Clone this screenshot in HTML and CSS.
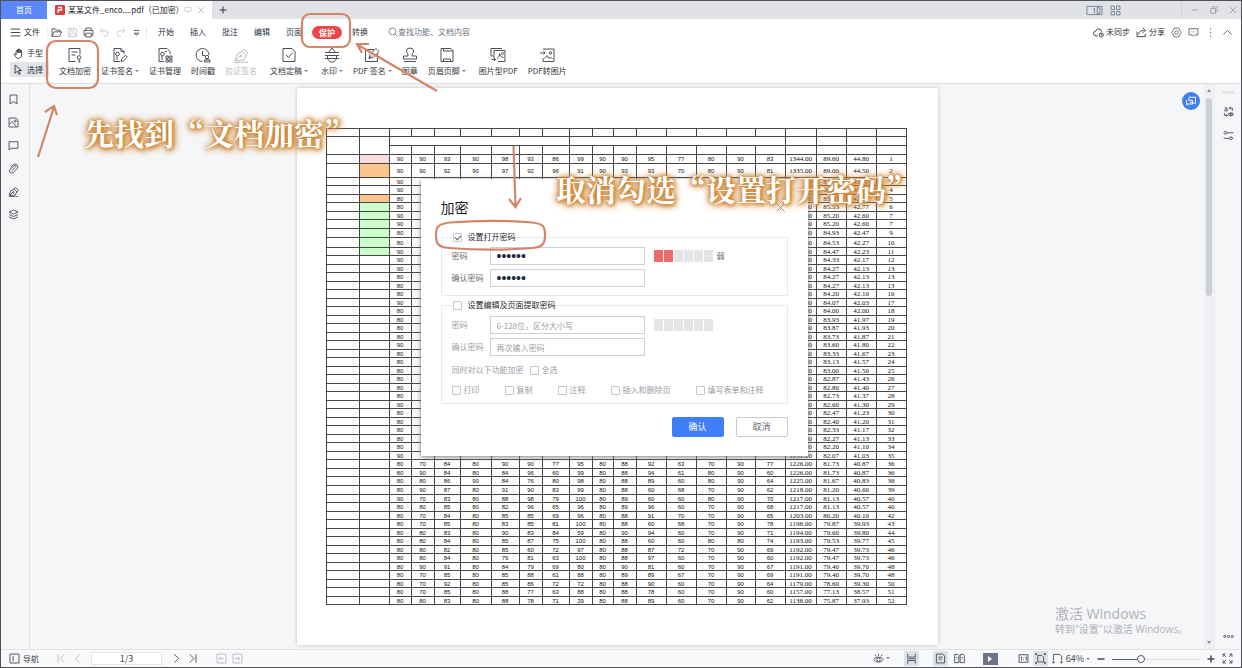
FILE: index.html
```html
<!DOCTYPE html>
<html lang="zh-CN">
<head>
<meta charset="utf-8">
<title>某某文件_enco....pdf</title>
<link rel="stylesheet" href="styles.css">
</head>
<body>
<svg class="defs" aria-hidden="true">
  <symbol id="bars" viewBox="0 0 16 16"><path d="M1 3h14M1 8h14M1 13h14"/></symbol>
  <symbol id="folder" viewBox="0 0 16 16"><path d="M1.500 13.500v-11h4l1.500 2h6v2.500M1.500 13.500l3-6.500h11l-3 6.500z"/></symbol>
  <symbol id="save" viewBox="0 0 16 16"><path d="M2 2h10l2 2v10H2zM5 2v4h5V2M4.500 14V9h7v5"/></symbol>
  <symbol id="print" viewBox="0 0 16 16"><path d="M4 5V1.500h8V5M4 12H1.500V5h13v7H12M4 9h8v5.500H4z"/></symbol>
  <symbol id="undo" viewBox="0 0 16 16"><path d="M5 2L2 5.500L5.500 8.500M2 5.500h7a4 4 0 0 1 0 8H7"/></symbol>
  <symbol id="redo" viewBox="0 0 16 16"><path d="M11 2l3 3.500l-3.500 3M14 5.500H7a4 4 0 0 0 0 8h2"/></symbol>
  <symbol id="more" viewBox="0 0 16 16"><path d="M4 5h8M4.500 9L8 12l3.500-3z"/></symbol>
  <symbol id="search" viewBox="0 0 16 16"><circle cx="7" cy="7" r="5.500"/><path d="M11 11l4 4"/></symbol>
  <symbol id="hand" viewBox="0 0 16 16"><path d="M4.500 10V4.500a1 1 0 0 1 2 0V7V2.500a1 1 0 0 1 2 0V7V2.500a1 1 0 0 1 2 0V7V4a1 1 0 0 1 2 0v6c0 3-1.500 5-4.500 5S4 13.500 2 9.500c-.4-1 .8-1.800 1.600-.8z"/></symbol>
  <symbol id="cursor" viewBox="0 0 16 16"><path d="M3 1.500v12l3-3l2.500 4.500l2-1l-2.500-4.500h4.500z"/></symbol>
  <symbol id="doclock" viewBox="0 0 16 16"><path d="M8.500 14.500H2v-13h11v6M4.500 5h6M4.500 8h4"/><circle cx="12" cy="10.500" r="1.800"/><path d="M12 12.300V15.500M12 14.500h1.500"/></symbol>
  <symbol id="certpen" viewBox="0 0 16 16"><path d="M8 14.500H2v-13h7l3 3V7M9 1.500v3h3M5 9v4"/><circle cx="5.500" cy="7" r="1.800"/><path d="M9 14.500l.6-2.500l3.900-3.800l1.900 1.900l-3.900 3.800z"/></symbol>
  <symbol id="certgrid" viewBox="0 0 16 16"><path d="M7 14.500H2v-13h8l3 3V7M8 4.500h2M5 9v4M9 9h2.300v2.300H9zM12.700 9H15v2.300h-2.300zM9 12.700h2.300V15H9zM12.700 12.700H15V15h-2.300z"/><circle cx="5.500" cy="7" r="1.800"/></symbol>
  <symbol id="clock" viewBox="0 0 16 16"><path d="M7.500 14.500A6.500 6.500 0 1 1 14 8M7.500 4v4.500H10"/><circle cx="12" cy="10" r="1.700"/><path d="M11 11.500v1.500M13 11.500v1.500M9.500 13h5.500v2H9.500z"/></symbol>
  <symbol id="pen" viewBox="0 0 16 16"><path d="M2 14L4 7l5-2.500l4 4L10.500 13zM2 14l5-5M9 4.500L11 2l4 4l-2 2.500M1 15.500h8l2-1l1 1h3"/><circle cx="8" cy="9" r="1"/></symbol>
  <symbol id="doccheck" viewBox="0 0 16 16"><path d="M2 1.500h9l3 3v10H2zM5 8l2.500 2.500L11.500 6"/></symbol>
  <symbol id="water" viewBox="0 0 16 16"><path d="M1 5.500h14M1 8.500h14M1 11.500h14M4.500 5.500L8 1l3.500 4.500M3.500 8.500C3 13 5.500 15 8 15s5-2 4.500-6.500"/></symbol>
  <symbol id="sign" viewBox="0 0 16 16"><path d="M10 2.500H1.500v12h12V7M5 11.500l1-4L12 1.500l3 3l-6 6zM5 11.500l3-3"/></symbol>
  <symbol id="stamp" viewBox="0 0 16 16"><path d="M6 8C6 6.500 4.500 6 4.500 4a3.500 3 0 0 1 7 0C11.500 6 10 6.500 10 8v1h4.500v3h-13V9H6zM2 14.500h12"/></symbol>
  <symbol id="header" viewBox="0 0 16 16"><path d="M2 1.500h10l2 2v11H2zM4.500 1.500v2.500H14M4.500 14.500V12h7v2.500"/></symbol>
  <symbol id="imgpdf" viewBox="0 0 16 16"><path d="M3 9H1V1.500h11M4 3.500h11v11H8M4 3.500v8M1.500 12.500h4M4 11L5.500 12.500L4 14M7 11.500C9 10 10 8 9.500 6.500C10 9 12 10.500 13.500 10.500"/><circle cx="12.500" cy="6.500" r="1"/></symbol>
  <symbol id="toimg" viewBox="0 0 16 16"><path d="M4 2h11v12.500H4V11M1 6h5M4.500 4.500L6 6L4.500 7.500M5.500 11.500L8 8.500l2 3l1.500-1.500l2 2"/><circle cx="11.500" cy="6" r="1.200"/></symbol>
  <symbol id="cloud" viewBox="0 0 16 16"><path d="M7 13H4.500a3.500 3.500 0 0 1-.5-7a4.500 4.500 0 0 1 8.800 1"/><circle cx="12" cy="11.500" r="3"/><path d="M12 9.500v2h1.500"/></symbol>
  <symbol id="share" viewBox="0 0 16 16"><path d="M1.500 7v7h12v-4M4 11c0-4 3-6 7-6M9.500 1.500L14 5l-4.500 3.500"/></symbol>
  <symbol id="gear" viewBox="0 0 16 16"><path d="M5 1.500h6l1.500 3L15 8l-2.500 3.500l-1.500 3H5l-1.500-3L1 8l2.500-3.500z"/><circle cx="8" cy="8" r="2.500"/></symbol>
  <symbol id="chat" viewBox="0 0 16 16"><path d="M1.500 2.500h13v9H10L8 13.500L6 11.500H1.500zM5 7h1M7.500 7h1M10 7h1"/></symbol>
  <symbol id="vdots" viewBox="0 0 16 16"><path d="M8 1.500v2M8 7v2M8 12.500v2"/></symbol>
  <symbol id="hdots" viewBox="0 0 16 16"><circle cx="2.500" cy="8" r="1.500"/><circle cx="8" cy="8" r="1.500"/><circle cx="13.500" cy="8" r="1.500"/></symbol>
  <symbol id="up" viewBox="0 0 16 16"><path d="M2 11l6-6l6 6"/></symbol>
  <symbol id="close" viewBox="0 0 16 16"><path d="M2 2l12 12M14 2L2 14"/></symbol>
  <symbol id="plus" viewBox="0 0 16 16"><path d="M8 1v14M1 8h14"/></symbol>
  <symbol id="minus" viewBox="0 0 16 16"><path d="M1 8h14"/></symbol>
  <symbol id="restore" viewBox="0 0 16 16"><path d="M1.500 5h9.500v9.500H1.500zM5 5V1.500h9.500V11H11"/></symbol>
  <symbol id="monitor" viewBox="0 0 16 16"><path d="M2 2.500h12v8h-4L8 13.500L6 10.500H2z"/></symbol>
  <symbol id="panes" viewBox="0 0 24 16"><path d="M1 2h22v12H1zM10 6l2-1v7M16 2v12M16 4h4v8h-4"/></symbol>
  <symbol id="tiles" viewBox="0 0 16 16"><path d="M1.500 1.500h5v5h-5zM9.500 1.500h5v5h-5zM1.500 9.500h5v5h-5zM9.500 9.500h5v5h-5z"/></symbol>
  <symbol id="bookmark" viewBox="0 0 16 16"><path d="M3 1.500h10v13l-5-3.500l-5 3.500z"/></symbol>
  <symbol id="image" viewBox="0 0 16 16"><path d="M1.500 1.500h10l3 3v10h-13zM2 11l4-4.500l6 7"/><circle cx="10.500" cy="6" r="1.500"/></symbol>
  <symbol id="comment" viewBox="0 0 16 16"><path d="M1.500 2.500h13v9.500H4.500L1.500 14.500z"/></symbol>
  <symbol id="clip" viewBox="0 0 16 16"><path d="M5 11.500l6-5.500a1.500 1.500 0 0 0-2-2.300L3 9a3.200 3.200 0 0 0 4.500 4.700l6-5.700A4 4 0 0 0 8 2.300L4 6"/></symbol>
  <symbol id="layers" viewBox="0 0 16 16"><path d="M8 1.500l6.500 3L8 7.500l-6.500-3zM1.500 8L8 11l6.500-3M1.500 11.500L8 14.500l6.500-3"/></symbol>
  <symbol id="translate" viewBox="0 0 16 16"><path d="M2.500 2.500C6 1 6 3 6 7.500M6 4.500C1 4 1 8 4 7.500l2-1M9 3h4.500v4M11 1L9 3l2 2M2 10v3.500h4M4.500 12L6.500 13.500L4.500 15.500M8.500 10.500h6v3h-6zM11.500 9v6.500"/></symbol>
  <symbol id="sliders" viewBox="0 0 16 16"><circle cx="3.500" cy="4" r="2"/><path d="M5.500 4H15M1 12h8"/><circle cx="11.500" cy="12" r="2"/><path d="M13.500 12H15"/></symbol>
  <symbol id="nav" viewBox="0 0 16 16"><path d="M1.500 1.500h13v13h-13zM6 4v8"/></symbol>
  <symbol id="first" viewBox="0 0 16 16"><path d="M3 2v12M12 2L6 8l6 6"/></symbol>
  <symbol id="prev" viewBox="0 0 16 16"><path d="M11 2L5 8l6 6"/></symbol>
  <symbol id="next" viewBox="0 0 16 16"><path d="M5 2l6 6l-6 6"/></symbol>
  <symbol id="last" viewBox="0 0 16 16"><path d="M4 2l6 6l-6 6M13 2v12"/></symbol>
  <symbol id="boxl" viewBox="0 0 16 16"><path d="M1.500 1.500h13v13h-13zM4.500 8h7M7 5.500L4.500 8L7 10.500"/></symbol>
  <symbol id="boxr" viewBox="0 0 16 16"><path d="M1.500 1.500h13v13h-13zM4.500 8h7M9 5.500L11.500 8L9 10.500"/></symbol>
  <symbol id="eye" viewBox="0 0 16 16"><path d="M1 9.500C4 5 12 5 15 9.500C12 14.500 4 14.500 1 9.500zM8 1v3M3 2.500l1.500 2.500M13 2.500L11.500 5"/><circle cx="8" cy="9.500" r="2.500"/></symbol>
  <symbol id="scrollp" viewBox="0 0 16 16"><path d="M2.500 1v5h11V1M1 8.500h14M2.500 15.500V11h11v4.500"/></symbol>
  <symbol id="single" viewBox="0 0 16 16"><path d="M2 1.500h9l3 3v10H2zM5 6h6M5 9h5"/></symbol>
  <symbol id="double" viewBox="0 0 16 16"><path d="M1 2h4.500l1.500 1.500V14H1zM9 2h4.500L15 3.500V14H9zM3 7h2M11 7h2"/></symbol>
  <symbol id="actual" viewBox="0 0 16 16"><path d="M1.500 2.500h13v11h-13zM4 6l1-.5V11M11 6l1-.5V11M8 6.500v1M8 9.500v1"/></symbol>
  <symbol id="fit" viewBox="0 0 16 16"><path d="M4 3.500h6l2.500 2.500v7H4zM1 1l2 2M15 1l-2 2M1 15l2-2M15 15l-2-2M1 3V1h2M13 1h2v2M1 13v2h2M13 15h2v-2"/></symbol>
  <symbol id="fitw" viewBox="0 0 16 16"><path d="M2 11V2h9l3 3v6M1 13.500h3M12 13.500h3M3 12L1 13.500L3 15M13 12l2 1.500L13 15"/></symbol>
  <symbol id="full" viewBox="0 0 16 16"><path d="M1.500 5.500v-4h4M1.500 1.500l4 4M10.500 1.500h4v4M14.500 1.500l-4 4M1.500 10.500v4h4M1.500 14.500l4-4M14.500 10.500v4h-4M14.500 14.500l-4-4"/></symbol>
</svg>

<div class="window">
  <header class="titlebar">
    <button class="home">首页</button>
    <div class="tab">
      <svg class="logo" viewBox="0 0 10 10"><rect width="10" height="10" rx="1"/><path d="M3 8V5h3.500V2.500H3"/></svg>
      <span>某某文件_enco....pdf（已加密）</span>
      <svg class="ic faint"><use href="#monitor"/></svg>
      <svg class="ic x faint"><use href="#close"/></svg>
    </div>
    <button class="plain newtab" aria-label="新建"><svg class="ic"><use href="#plus"/></svg></button>
    <div class="winctl">
      <svg class="ic wide"><use href="#panes"/></svg>
      <svg class="ic lead"><use href="#tiles"/></svg>
      <span class="ctls"><svg class="ic x"><use href="#minus"/></svg><svg class="ic x"><use href="#restore"/></svg><svg class="ic x"><use href="#close"/></svg></span>
    </div>
  </header>

  <section class="ribbon">
    <nav class="menu">
      <button class="plain file"><svg class="ic"><use href="#bars"/></svg>文件</button>
      <div class="quick">
        <svg class="ic"><use href="#folder"/></svg><svg class="ic faint"><use href="#save"/></svg><svg class="ic"><use href="#print"/></svg><svg class="ic faint"><use href="#undo"/></svg><svg class="ic faint"><use href="#redo"/></svg><svg class="ic"><use href="#more"/></svg>
      </div>
      <div class="tabs">
        <button class="plain">开始</button><button class="plain">插入</button><button class="plain">批注</button><button class="plain">编辑</button><button class="plain">页面</button><button class="pill">保护</button><button class="plain">转换</button>
      </div>
      <label class="search"><svg class="ic"><use href="#search"/></svg><input type="text" placeholder="查找功能、文档内容"></label>
      <div class="account">
        <button class="plain"><svg class="ic"><use href="#cloud"/></svg>未同步</button>
        <button class="plain"><svg class="ic"><use href="#share"/></svg>分享</button>
        <svg class="ic"><use href="#gear"/></svg><svg class="ic"><use href="#chat"/></svg><svg class="ic"><use href="#vdots"/></svg><svg class="ic"><use href="#up"/></svg>
      </div>
    </nav>
    <div class="tools">
      <div class="modes">
        <button class="plain"><svg class="ic"><use href="#hand"/></svg>手型</button>
        <button class="plain on"><svg class="ic"><use href="#cursor"/></svg>选择</button>
      </div>
      <button class="tool"><svg><use href="#doclock"/></svg><span>文档加密</span></button>
      <button class="tool"><svg><use href="#certpen"/></svg><span class="dd">证书签名</span></button>
      <button class="tool"><svg><use href="#certgrid"/></svg><span>证书管理</span></button>
      <button class="tool"><svg><use href="#clock"/></svg><span>时间戳</span></button>
      <button class="tool off"><svg><use href="#pen"/></svg><span>验证签名</span></button>
      <button class="tool gapped"><svg><use href="#doccheck"/></svg><span class="dd">文档定稿</span></button>
      <button class="tool gapped"><svg><use href="#water"/></svg><span class="dd">水印</span></button>
      <button class="tool"><svg><use href="#sign"/></svg><span class="dd">PDF 签名</span></button>
      <button class="tool"><svg><use href="#stamp"/></svg><span>图章</span></button>
      <button class="tool"><svg><use href="#header"/></svg><span class="dd">页眉页脚</span></button>
      <button class="tool gapped"><svg><use href="#imgpdf"/></svg><span>图片型PDF</span></button>
      <button class="tool"><svg><use href="#toimg"/></svg><span>PDF转图片</span></button>
    </div>
  </section>

  <div class="middle">
    <aside class="side">
      <svg class="ic"><use href="#bookmark"/></svg><svg class="ic"><use href="#image"/></svg><svg class="ic"><use href="#comment"/></svg><svg class="ic"><use href="#clip"/></svg><svg class="ic"><use href="#pen"/></svg><svg class="ic"><use href="#layers"/></svg>
    </aside>
    <main class="workspace">
      <article class="sheet">
        <table class="scores"><colgroup id="cols"></colgroup><tbody id="rows"></tbody></table>
        <form class="dialog">
          <div class="head"><h2>加密</h2><button type="button" class="plain" aria-label="关闭"><svg class="ic"><use href="#close"/></svg></button></div>
          <fieldset>
            <legend><label><input type="checkbox" checked>设置打开密码</label></legend>
            <div class="fields">
              <label for="p1">密码</label><input id="p1" type="password" value="123456">
              <div class="meter"><i class="hit"></i><i class="hit"></i><i></i><i></i><i></i><i></i><span>弱</span></div>
              <label for="p2">确认密码</label><input id="p2" type="password" value="123456">
            </div>
          </fieldset>
          <fieldset class="second">
            <legend><label><input type="checkbox">设置编辑及页面提取密码</label></legend>
            <div class="fields">
              <label for="p3">密码</label><input id="p3" type="text" placeholder="6-128位，区分大小写">
              <div class="meter"><i></i><i></i><i></i><i></i><i></i><i></i></div>
              <label for="p4">确认密码</label><input id="p4" type="text" placeholder="再次输入密码">
            </div>
            <div class="checks all"><span>同时对以下功能加密</span><label><input type="checkbox">全选</label></div>
            <div class="checks"><label><input type="checkbox">打印</label><label><input type="checkbox">复制</label><label><input type="checkbox">注释</label><label><input type="checkbox">插入和删除页</label><label><input type="checkbox">填写表单和注释</label></div>
          </fieldset>
          <div class="foot"><button type="button" class="ok">确认</button><button type="button">取消</button></div>
        </form>
      </article>
      <button class="float" aria-label="转换"><svg viewBox="0 0 16 16"><path d="M5 3h9v8h-3M2 7v5h8V7H5V4M7 9.500h3M3 14l-1-2"/></svg></button>
      <div class="activate"><p>激活 Windows</p><small>转到"设置"以激活 Windows。</small></div>
    </main>
    <div class="scroll"><b class="tri top"></b><span></span><b class="tri"></b></div>
    <aside class="side right"><i></i><svg class="ic"><use href="#translate"/></svg><svg class="ic"><use href="#sliders"/></svg><svg class="ic end"><use href="#hdots"/></svg></aside>
  </div>

  <footer class="status">
    <button class="plain navb"><svg class="ic"><use href="#nav"/></svg>导航</button>
    <svg class="ic faint"><use href="#first"/></svg><svg class="ic faint"><use href="#prev"/></svg>
    <input class="pageno" type="text" value="1/3" aria-label="页码">
    <svg class="ic"><use href="#next"/></svg><svg class="ic"><use href="#last"/></svg>
    <svg class="ic faint jump"><use href="#boxl"/></svg><svg class="ic faint"><use href="#boxr"/></svg>
    <div class="view">
      <span class="dd eye"><svg class="ic"><use href="#eye"/></svg></span>
      <span class="hl lone"><svg class="ic"><use href="#scrollp"/></svg></span>
      <span class="hl"><svg class="ic"><use href="#single"/></svg></span>
      <svg class="ic"><use href="#double"/></svg>
      <button class="play" aria-label="播放"></button>
      <svg class="ic"><use href="#actual"/></svg>
      <span class="hl tight"><svg class="ic"><use href="#fit"/></svg></span>
      <svg class="ic"><use href="#fitw"/></svg>
      <span class="dd zoom">64%</span>
      <svg class="ic x strong"><use href="#minus"/></svg>
      <input type="range" min="0" max="100" value="31" aria-label="缩放">
      <svg class="ic x strong"><use href="#plus"/></svg>
      <svg class="ic full"><use href="#full"/></svg>
    </div>
  </footer>

  <svg class="marks" aria-hidden="true">
    <rect x="47" y="41" width="51" height="47" rx="9"/>
    <rect x="302" y="14" width="48" height="33" rx="8"/>
    <path d="M450 222.500C475 220.500 508 220.500 532 222.500C544 224 545 227 545 235C545 244 543 247 532 248C508 250 475 250 449 248C438 247 436 244 436 235C436 227 438 224 450 222.500z"/>
    <path d="M437 91L358 45M369 44L357 44L362 53"/>
    <path d="M38 157L54 107M45 112L54 106L57 115"/>
    <path d="M513.500 146L515.500 206M509 199L515.500 207L521 198"/>
  </svg>
  <p class="note one">先找到“文档加密”</p>
  <p class="note two">取消勾选“设置打开密码”</p>
</div>
<script src="table.js"></script>
</body>
</html>
```

FILE: table.js
```js
const widths = [33,30,22,23,26,31,28,23,27,23,21,23,30,30,30,29,30,31,30,30,30];
const heights = [9,14,8,9,8,9,8,9,9,10,8,9,8,9,8,9,8,9,8,9,8,9,8,9,8,9,8,9,8,9,8,9,8,9,8,9,8,9,9,8,9,8,9,8,9,8,9,8,9,8,9,8];
const marks = {
  0: '90 90 93 90 98 93 86 99 90 90 95 77 80 90 83',
  1: '90 90 92 90 97 92 96 91 90 93 93 70 80 90 81'
};
const first = '90 90 90 90 80 80 90 90 80 80 90 90 90 80 80 80 90 80 80 80 80 90 80 80 80 80 80 80 90 80 80 80 80 80 90'.split(' ');
[
  '80 70 84 80 90 90 77 95 80 88 92 63 70 90 77',
  '80 90 84 80 84 96 60 99 80 88 94 61 80 90 60',
  '80 80 86 90 84 76 80 98 80 88 89 60 80 90 64',
  '80 90 87 80 91 90 83 99 80 88 60 68 70 90 62',
  '90 70 83 80 88 98 79 100 80 89 60 60 80 90 70',
  '80 80 85 80 82 96 65 96 80 89 96 60 70 90 68',
  '80 70 84 80 85 85 69 96 80 88 91 70 70 90 65',
  '80 70 85 80 83 85 81 100 80 88 60 68 70 90 78',
  '80 80 83 80 90 83 84 59 80 90 94 60 70 90 71',
  '80 80 84 80 85 87 75 100 80 88 60 60 80 80 74',
  '80 80 82 80 85 60 72 97 80 88 87 72 70 90 69',
  '80 80 84 80 79 81 63 100 80 88 97 60 70 90 60',
  '80 90 91 80 84 79 69 80 80 90 81 60 70 90 67',
  '80 70 85 80 85 88 61 88 80 89 89 67 70 90 69',
  '80 70 92 80 85 86 72 72 80 88 90 60 70 90 64',
  '80 70 85 80 88 77 63 88 80 88 78 60 70 90 60',
  '80 80 83 80 88 78 71 39 80 88 89 60 70 90 62'
].forEach((line, i) => { marks[35 + i] = line; });
const totals = [1344,1335,1313,1296,1288,1283,1278,1278,1274,1268,1267,1265,1264,1264,1264,1263,1261,1260,1259,1258,1256,1254,1250,1247,1245,1243,1242,1241,1239,1237,1236,1235,1234,1233,1231,1226,1226,1225,1218,1217,1217,1203,1198,1194,1193,1192,1192,1191,1191,1179,1157,1138];
const tint = i => i === 0 ? 'pink' : i === 1 || i === 4 ? 'orange' : i > 4 && i < 11 ? 'green' : '';

document.getElementById('cols').innerHTML = widths.map(w => `<col style="width:${w}px">`).join('');

const empty = n => '<td></td>'.repeat(n);
let html = `<tr style="height:8px">${empty(21)}</tr>`;
html += `<tr style="height:9px"><td rowspan="2"></td><td rowspan="2"></td><td colspan="7"></td><td colspan="8"></td>${empty(4)}</tr>`;
html += `<tr style="height:9px">${empty(19)}</tr>`;
totals.forEach((t, i) => {
  const cells = marks[i] ? marks[i].split(' ') : [first[i], ...Array(14).fill('')];
  const avg = t / 15;
  html += `<tr style="height:${heights[i]}px"><td></td><td class="${tint(i)}"></td>`
    + cells.map(c => `<td>${c}</td>`).join('')
    + [t.toFixed(2), avg.toFixed(2), (avg / 2).toFixed(2), totals.indexOf(t) + 1].map(c => `<td class="num">${c}</td>`).join('')
    + '</tr>';
});
document.getElementById('rows').innerHTML = html;
```

FILE: styles.css
```css
* { box-sizing: border-box; }
body { margin: 0; font: 8px/10px "Noto Sans CJK SC", sans-serif; color: #30343c; }
button, input { font: inherit; color: inherit; }
p, h2 { margin: 0; }
button { padding: 0; border: 0; background: none; white-space: nowrap; }
svg { fill: none; stroke: currentColor; stroke-width: 1.3; flex: none; }
.defs { display: none; }
.ic { width: 11px; height: 11px; display: block; }
.x { width: 8px; height: 8px; }
.wide { width: 17px; }
.faint { color: #b9bcc3; }
.plain { display: flex; align-items: center; gap: 4px; }

.window { position: relative; display: grid; grid-template-rows: 18px 65px minmax(0, 1fr) 18px; height: 100vh; min-width: 900px; border: 1px solid #50505a; overflow: hidden; background: #f5f6f8; }

.titlebar { display: flex; align-items: center; background: #e1e2e5; }
.home { align-self: stretch; width: 46px; background: #5c88fb; color: #fff; }
.tab { align-self: stretch; display: flex; align-items: center; gap: 3px; padding: 0 7px 0 8px; background: #fff; color: #1e2128; }
.tab span { margin-right: -3px; }
.tab .faint { width: 8px; height: 8px; }
.tab .x { margin-left: 2px; color: #a2a6ae; }
.logo { width: 10px; height: 10px; }
.logo rect { fill: #e03c40; stroke: none; }
.logo path { stroke: #fff; }
.newtab { margin-left: 7px; }
.newtab svg { width: 8px; height: 8px; stroke-width: 2; }
.winctl { margin-left: auto; display: flex; align-items: center; gap: 7px; color: #6f7d98; }
.ctls { display: flex; gap: 11px; margin-left: 53px; padding: 4px 4px 4px 9px; border-left: 1px solid #d0d2d6; color: #85888f; }

.ribbon { background: #fff; border-bottom: 1px solid #dcdee2; display: grid; grid-template-rows: 26px 1fr; }
.menu { display: flex; align-items: center; padding: 0 8px 0 9px; }
.file { padding-right: 7px; gap: 3px; border-right: 1px solid #eeeff1; }
.quick { display: flex; gap: 5px; padding: 0 4px 0 3px; border-right: 1px solid #e6e7ea; color: #4b505a; }
.quick .faint { color: #c6c8ce; }
.tabs { display: flex; align-items: center; gap: 16px; margin-left: 11px; }
.pill { margin: 0 -6px; padding: 0 7px; height: 13px; line-height: 13px; border-radius: 7px; background: #e8484a; color: #fff; font-weight: bold; }
.search { display: flex; align-items: center; margin-left: 20px; color: #6c7480; }
.search input { width: 90px; padding: 0; border: 0; background: none; }
.search .ic { width: 10px; height: 10px; }
::placeholder { color: inherit; opacity: 1; }
.account { margin-left: auto; display: flex; align-items: center; gap: 6px; color: #5d626b; }
.account .plain { gap: 2px; color: #30343c; }

.tools { display: flex; align-items: flex-start; gap: 10px; padding: 1px 9px; }
.modes { display: grid; grid-template-rows: 14px 15px; gap: 2px; width: 39px; }
.modes button { padding-left: 3px; gap: 3px; }
.modes .on { background: #e2e5ea; }
.tool { display: flex; flex-direction: column; align-items: center; gap: 3px; }
.tool svg { width: 16px; height: 16px; stroke-width: 1; margin-top: 1px; color: #4b505a; }
.tool.off, .off svg { color: #b9bcc1; }
.gapped { margin-left: 3px; }
.dd::after { content: ""; display: inline-block; margin: 0 0 2px 2px; border: 2px solid transparent; border-top-color: #7a7f88; border-bottom: 0; }

.middle { display: flex; min-height: 0; }
.side { width: 29px; display: flex; flex-direction: column; align-items: center; gap: 12px; padding: 10px 3px 0 0; border-right: 1px solid #dfe1e5; color: #454952; }
.right { width: 27px; padding: 7px 0 7px; border: 0; border-left: 1px solid #eceef0; gap: 13px; }
.right i { width: 13px; height: 3px; border-radius: 2px; background: #e2e4e8; margin-bottom: -1px; }
.side .end { margin-top: auto; }
.scroll { width: 10px; display: flex; flex-direction: column; align-items: center; gap: 6px; padding: 5px 0; background: #eff0f3; }
.scroll span { width: 6px; height: 198px; margin-bottom: auto; border-radius: 3px; background: #cdcfd6; }
.tri { border: 2px solid transparent; border-top: 3px solid #858b98; border-bottom: 0; }
.tri.top { transform: rotate(180deg); }
.workspace { position: relative; flex: 1; display: flex; justify-content: center; align-items: flex-start; padding-top: 4px; }
.sheet { position: relative; padding: 40px 31px 40px 29px; background: #fff; box-shadow: 0 0 4px #bdc0c6; }

.scores { width: 581px; table-layout: fixed; border-collapse: collapse; font: 6px/6px "Liberation Sans", sans-serif; color: #111; text-align: center; }
.scores td { padding: 0; border: 1px solid #44464a; overflow: hidden; white-space: nowrap; }
.scores .num { font: 7px/6px "Liberation Serif", serif; }
.pink { background: #fbdcdc; }
.orange { background: #fcc58e; }
.green { background: #ccffcc; }

.dialog { position: absolute; left: 124px; top: 91px; width: 387px; padding: 18px 20px 19px; background: #fff; box-shadow: 0 1px 5px #777; color: #666a72; }
.head { display: flex; justify-content: space-between; margin-bottom: 15px; }
.head h2 { font-size: 14px; line-height: 20px; font-weight: normal; color: #1c1e22; }
.head .ic { margin-right: 2px; stroke-width: 1; }
fieldset { min-width: 0; margin: 0; padding: 5px 10px 8px; border: 1px solid #e9eaec; }
legend { margin-left: 0; padding: 0 1px; color: #24272c; }
legend label, .checks label { display: flex; align-items: center; gap: 3px; }
legend label { gap: 6px; }
input[type=checkbox] { appearance: none; width: 9px; height: 9px; margin: 0; border: 1px solid #c3c6cf; border-radius: 1px; background: #fff; }
input[type=checkbox]:checked::after { content: ""; display: block; width: 5px; height: 3px; margin: 1px; border: solid #5b6070; border-width: 0 0 1px 1px; transform: rotate(-45deg); }
.fields { display: grid; grid-template-columns: 38px 155px 1fr; row-gap: 4px; align-items: center; }
.fields > input { grid-column: 2; height: 18px; padding: 0 6px; border: 1px solid #cdd0d6; background: #fff; }
.fields > input[type=password] { font: 14px/14px "Liberation Sans", sans-serif; color: #1f2940; }
.meter { display: flex; align-items: center; gap: 1px; margin-left: 9px; }
.meter i { width: 9px; height: 12px; background: #e5e5e6; }
.meter .hit { background: #ee6a6c; }
.meter span { margin-left: 3px; }
.second { margin-top: 4px; padding-top: 6px; color: #9a9da4; }
.checks { display: flex; gap: 25px; margin-top: 10px; line-height: 10px; }
.checks.all { gap: 6px; margin-top: 9px; }
.foot { display: flex; justify-content: flex-end; gap: 12px; margin-top: 13px; }
.foot button { width: 52px; height: 20px; border: 1px solid #c6c9d3; border-radius: 2px; font-size: 9px; }
.foot .ok { border-color: #417ff9; background: #417ff9; color: #fff; }

.float { position: absolute; right: 4px; top: 8px; width: 18px; height: 18px; border-radius: 50%; background: #3f7ff0; color: #fff; }
.float svg { width: 12px; height: 12px; margin: 3px; display: block; }
.activate { position: absolute; right: 16px; bottom: 13px; color: #b0b3b8; }
.activate p { font: 14px/18px "Open Sans", "Noto Sans CJK SC", sans-serif; }
.activate small { font: 10px/13px "Open Sans", "Noto Sans CJK SC", sans-serif; display: block; }

.status { display: flex; align-items: center; gap: 5px; padding: 0 8px; border-top: 1px solid #dfe1e5; background: #f8f9fa; color: #454952; }
.navb { margin-right: 12px; gap: 3px; }
.pageno { width: 71px; height: 13px; margin: 0 4px 0 3px; border: 1px solid #e3e5e8; background: #fff; text-align: center; font-size: 9px; }
.jump { margin-left: 13px; }
.view { margin-left: auto; display: flex; align-items: center; gap: 6px; }
.eye { display: flex; align-items: center; }
.hl { padding: 2px; background: #dde1e8; }
.hl.lone { margin: 0 8px; }
.tight { margin: 0 -2px; }
.play { width: 15px; height: 12px; margin: 0 14px 0 12px; background: #6d7488; display: grid; place-items: center; }
.play::after { content: ""; border: 3px solid transparent; border-left: 4px solid #fff; border-right: 0; }
.zoom { font-size: 9px; margin-left: -3px; }
.strong { stroke-width: 3; margin: 0 1px; }
.status .full { margin-left: 0; }
input[type=range] { appearance: none; width: 88px; height: 10px; margin: 0; background: linear-gradient(#555b66, #555b66) 0 5px / 31% 1px no-repeat, linear-gradient(#d8dade, #d8dade) 0 5px / 100% 1px no-repeat; }
input[type=range]::-webkit-slider-thumb { appearance: none; width: 8px; height: 8px; border: 1px solid #50555f; border-radius: 50%; background: #fff; }

.marks { position: absolute; inset: -1px; width: 100%; height: 100%; overflow: visible; pointer-events: none; color: #d2856a; stroke-width: 2.2; }
.note { position: absolute; font: bold 30px/36px "Noto Serif CJK SC", "Noto Sans CJK SC", serif; color: #fff; white-space: nowrap; text-shadow: 0 0 2px #d08a3c, 1px 1px 4px #cd8534, 0 0 5px #cd8534, 1px 1px 8px #cf8c40, 0 0 8px #cf8c40; }
.one { left: 83px; top: 113px; }
.two { left: 555px; top: 169px; }
```
